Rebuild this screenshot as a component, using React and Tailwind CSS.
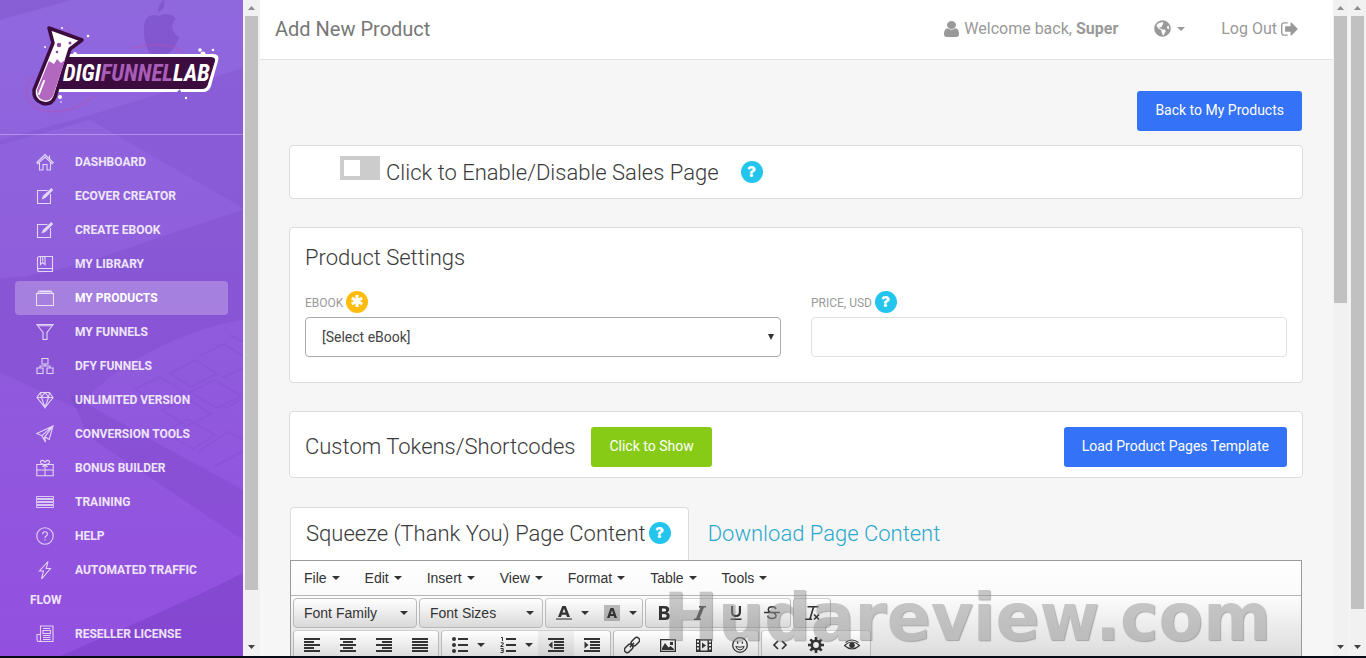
import { useState } from 'react';
import { FaGlobeAmericas, FaQuestion } from 'react-icons/fa';

const navItems = [
    { label: 'Dashboard', icon: 'home' },
    { label: 'eCover Creator', icon: 'note' },
    { label: 'Create eBook', icon: 'note' },
    { label: 'My Library', icon: 'library' },
    { label: 'My Products', icon: 'box' },
    { label: 'My Funnels', icon: 'funnel' },
    { label: 'DFY Funnels', icon: 'network' },
    { label: 'Unlimited Version', icon: 'diamond' },
    { label: 'Conversion Tools', icon: 'plane' },
    { label: 'Bonus Builder', icon: 'gift' },
    { label: 'Training', icon: 'menu' },
    { label: 'Help', icon: 'help' },
    { label: 'Automated Traffic Flow', icon: 'bolt' },
    { label: 'Reseller License', icon: 'news' },
];

// thin 18x18 outline icons
const navIcons = {
    home: <path d="M.8 9.500 9 1.600l8.200 7.900-1 1.200L9 4l-7.200 6.700zM3.500 9.500v7.500h3.500v-5.500h4v5.500h3.500V9.500M13.500 2.500v3" />,
    note: <path d="M11.500 3.500H1.500v13h13V7M6.500 11.500l1-2.500 7.800-7.200 1.200 1.200-7.500 7.500zM7.500 10.500l8.500-8.500" />,
    library: <path d="M1.500 3.500q0-2 2-2h13v15h-13q-2 0-2-2zM1.500 13.500h15M4.500 1.500v8l2.200-2 2.300 2v-8M6.700 1.500v5" />,
    box: <path d="M.5 4.500h17v12H.5zM1.500 4.500l1.500-2.500h12l1.500 2.500M3.500 3h11" />,
    funnel: <path d="M.8 1.500h16.400L11 9.500v7H7v-7zM1.500 2.800h15" />,
    network: <path d="M6 1.500h6v5.500H6zM1 11h6v5.500H1zM11 11h6v5.500h-6zM9 7v2M4 11V9h10v2" />,
    diamond: <path d="M4.500 1.500h9L17 6.500 9 16.500 1 6.500zM1 6.500h16M5.500 6.500 9 16.500l3.500-10M5.500 6.500 7 4l2-2.500L11 4l1.500 2.500M4.500 1.500l1 5M13.500 1.500l-1 5" />,
    plane: <path d="M17 1 .8 8.500l5 2.200L17 1l-3.800 13.500-4.400-2.700L17 1M5.800 10.700 9.500 17l-.7-5.200M8.800 11.800l-1.200 2" />,
    gift: <path d="M.8 5.500h16.400v11.200H.8zM.8 11h16.400M9 5.500v11.200M9 5.500C7 5.500 4.500 5 4.500 3S7.500.5 9 3.200C10.500.5 13.500 1 13.500 3S11 5.500 9 5.500zM9 5.500 6.500 8M9 5.500 11.500 8" />,
    menu: <path d="M.5 3.500h17v2H.5zM.5 6.500h17v2H.5zM.5 9.500h17v2H.5zM.5 12.500h17v2H.5z" strokeWidth=".9" />,
    help: (
        <>
            <circle cx="9" cy="9" r="8.200" />
            <path d="M6.600 7.200q0-2.500 2.400-2.500t2.400 2.200q0 1.300-1.200 2T9 11M9 12.300v1.200" />
        </>
    ),
    bolt: <path d="M12 .5 3.500 10h4L5.500 18l9-10.500h-4.300z" />,
    news: <path d="M4.500 1h12.500v15.500H2.500Q1 16.500 1 14.500v-5h3.500zM4.500 9.500v5q0 2-1 2M7 3.500h7.500M7 5.500h7.500v3H7zM7 10.500h7.500M7 12.500h7.500M7 14.500h7.500" />,
};

function NavIcon({ name }) {
    return (
        <svg
            viewBox="0 0 18 18"
            className="mb-0.5 ml-1.5 mr-[21px] inline-block h-[18px] w-[18px] fill-none stroke-white/75 align-middle"
            strokeWidth="1.100"
            aria-hidden="true"
        >
            {navIcons[name]}
        </svg>
    );
}

function SidebarBackdrop() {
    return (
        <svg className="absolute inset-0 h-full w-full" viewBox="0 0 243 656" preserveAspectRatio="none" aria-hidden="true">
            <defs>
                <linearGradient id="side" x1="0" y1="0" x2="0" y2="1">
                    <stop offset="0" stopColor="#9068de" />
                    <stop offset=".4" stopColor="#8f5edc" />
                    <stop offset="1" stopColor="#9350e0" />
                </linearGradient>
            </defs>
            <path fill="url(#side)" d="M0 0h243v656H0z" />
            <g fill="#5b2aa5">
                <path opacity=".14" d="M0 0h72L0 20z" />
                <path opacity=".1" d="M0 140 90 115l153-47v140L90 120 0 145z" />
                <path opacity=".12" d="M0 278c60 0 150-40 243-68v110c-70 10-150 60-163 90L0 372z" />
                <path opacity=".14" d="M70 395 243 490v50L88 436z" />
                <path opacity=".24" d="M60 656C120 630 190 600 243 573v83z" />
                <path opacity=".26" d="M144 28c0-12 8-15 15-12 5-3 13-3 17 3-6 4-5 14 3 18-3 9-8 17-13 17H150c-5-8-6-16-6-26zM158 12c0-6 3-11 6-12 1 6-1 11-6 12z" />
            </g>
            <g stroke="#6d37b5" strokeWidth="2" fill="none" opacity=".12">
                <path d="m170 373 25-13 22 14-26 13zM200 356l24-12 19 12M222 378l21-10M135 389l25-12 24 15-26 12zM190 392l24-12 27 16-24 12zM162 410l24-12 25 16-24 12zM198 452l30-20 15 8M215 466l28-15M165 432l22-13 28 16-22 14zM225 408l18-9M230 335l13 7" />
            </g>
        </svg>
    );
}

function Logo() {
    return (
        <svg viewBox="0 0 200 100" className="h-[100px] w-[200px]" role="img" aria-label="DigiFunnelLab">
            <path d="M110 32C140 24 178 30 156 56M12 60C-4 76 6 100 40 95c12-2 24-8 32-15M47 28c3-7 2-12-2-17" fill="none" stroke="#b053b4" strokeWidth="1.500" opacity=".55" />
            <path d="M34 38h157q7 0 5 7l-7 25q-2 6-8 6h-22l-1-3-3 3H30z" fill="#fff" />
            <path d="M38 41h150q6 0 5 4l-7 23q-1 5-6 5H32z" fill="#3d0c3f" />
            <text x="41" y="65" fontFamily="'Liberation Sans Narrow', 'Roboto Condensed', 'Liberation Sans', sans-serif" fontSize="23" fontWeight="700" fontStyle="italic" fill="#fff">
                DIGI<tspan fill="#a85db8">FUNNEL</tspan>LAB
            </text>
            <path d="M27 12 60 24l-12 9-15 48q-4 9-13 6t-8-13L31 27z" fill="#fff" stroke="#3d0c3f" strokeWidth="3.500" strokeLinejoin="round" />
            <path d="m27 45 5 3 3-5 4 4 4-3-12 36q-4 6-10 4t-6-10z" fill="#b368bf" />
            <path d="m22 65-5 13" stroke="#fff" strokeWidth="2" strokeLinecap="round" />
            <g fill="#8e45a5">
                <circle cx="37" cy="29" r="2.200" />
                <circle cx="48" cy="27" r="1.500" />
                <circle cx="35" cy="36" r="1.300" />
            </g>
            <g fill="#fff">
                <circle cx="66" cy="20" r="1.300" />
                <circle cx="40" cy="12" r="1" />
                <circle cx="23" cy="31" r="1" />
                <circle cx="53" cy="38" r="2" />
                <circle cx="38" cy="81" r="2" />
                <circle cx="39" cy="86" r=".8" />
                <circle cx="164" cy="82" r="1.200" />
                <circle cx="178" cy="34" r="1.800" />
                <circle cx="181" cy="38" r="2.500" />
                <circle cx="191" cy="34" r="1.300" />
            </g>
        </svg>
    );
}

function Scrollbar({ thumb }) {
    return (
        <div className="flex w-4 shrink-0 flex-col items-center bg-[#f1f1f1]" aria-hidden="true">
            <svg viewBox="0 0 16 16" className="h-4 w-4 shrink-0 fill-[#8b8b8b]"><path d="m4 10 3.500-4L11 10z" /></svg>
            <div className="w-full min-h-0 flex-1 pl-px pr-0.5">
                <div className={`bg-[#c1c1c1] ${thumb}`} />
            </div>
            <svg viewBox="0 0 16 16" className="h-4 w-4 shrink-0 fill-[#404040]"><path d="m4 5 3.500 4L11 5z" /></svg>
        </div>
    );
}

function Badge({ type = 'help' }) {
    if (type === 'required') {
        return (
            <span className="inline-flex h-[22px] w-[22px] shrink-0 items-center justify-center rounded-full bg-[#ffbc0c] pb-0.5 text-white">
                <svg viewBox="0 0 12 12" className="h-3 w-3" stroke="currentColor" strokeWidth="3" aria-hidden="true">
                    <path d="M6 0v12M.8 3l10.400 6M.8 9l10.400-6" />
                </svg>
            </span>
        );
    }
    return (
        <span className="inline-flex h-[22px] w-[22px] shrink-0 items-center justify-center rounded-full bg-[#23c5ec] pb-0.5 text-white">
            <FaQuestion className="h-[11px] w-[11px] stroke-current" strokeWidth="24" />
        </span>
    );
}

function Caret() {
    return (
        <svg viewBox="0 0 8 4" className="h-1 w-2 shrink-0 fill-current" aria-hidden="true"><path d="M0 0h8L4 4z" /></svg>
    );
}

const toolIcons = {
    left: <path d="M0 2h16v2H0zM0 5h10v2H0zM0 8h16v2H0zM0 11h10v2H0zM0 14h16v2H0z" />,
    center: <path d="M0 2h16v2H0zM3 5h10v2H3zM0 8h16v2H0zM3 11h10v2H3zM0 14h16v2H0z" />,
    right: <path d="M0 2h16v2H0zM6 5h10v2H6zM0 8h16v2H0zM6 11h10v2H6zM0 14h16v2H0z" />,
    justify: <path d="M0 2h16v2H0zM0 5h16v2H0zM0 8h16v2H0zM0 11h16v2H0zM0 14h16v2H0z" />,
    bullets: <path d="M6 2h10v2H6zM6 8h10v2H6zM6 14h10v2H6zM0 3a2 2 0 1 1 4 0 2 2 0 0 1-4 0zM0 9a2 2 0 1 1 4 0 2 2 0 0 1-4 0zM0 15a2 2 0 1 1 4 0 2 2 0 0 1-4 0z" />,
    numbers: (
        <>
            <path d="M6 2h10v2H6zM6 8h10v2H6zM6 14h10v2H6z" />
            <path d="M1 1.500h1.500V5M.8 6.800h2.400v1.500L.8 10v.5h2.700M.5 12.500h2.700v4H.5M1 14.400h2" fill="none" stroke="currentColor" />
        </>
    ),
    outdent: <path d="M0 2h16v2H0zM6 5h10v2H6zM6 8h10v2H6zM6 11h10v2H6zM0 14h16v2H0zM4.500 5.500v7L.5 9z" />,
    indent: <path d="M0 2h16v2H0zM6 5h10v2H6zM6 8h10v2H6zM6 11h10v2H6zM0 14h16v2H0zM.5 5.500v7l4-3.500z" />,
    link: (
        <g fill="none" stroke="currentColor" strokeWidth="1.500" transform="rotate(-45 8 9)">
            <rect x="-1.500" y="6.200" width="9.500" height="5.600" rx="2.800" />
            <rect x="8" y="6.200" width="9.500" height="5.600" rx="2.800" />
            <path d="M5 9h6" />
        </g>
    ),
    image: <path fillRule="evenodd" d="M0 3h16v13H0zm1.300 1.300v10.400h13.400V4.300zM2 14V12l3-5 3.500 4.500L10.500 10l3.500 3v1zM10 6h3v3h-3z" />,
    media: <path fillRule="evenodd" d="M0 3h16v13H0zm1 1.500v2h2v-2zm0 3.500v2h2V8zm0 3.500v2h2v-2zM13 4.500v2h2v-2zM13 8v2h2V8zm0 3.500v2h2v-2zM4.500 4.500v10h7v-10zM6 6.500l4 3-4 3z" />,
    smile: (
        <g fill="none" stroke="currentColor" strokeWidth="1.300">
            <circle cx="8" cy="9" r="7.300" />
            <path d="M3.800 10.500Q5 14 8 14t4.200-3.500q-4.200 1.500-8.400 0z" strokeWidth="1" />
            <path d="M5.600 5.500v2.300M10.400 5.500v2.300" />
        </g>
    ),
    code: <path d="M6 5 2 9l4 4M10 5l4 4-4 4" fill="none" stroke="currentColor" strokeWidth="1.700" />,
    gear: (
        <g fill="none" stroke="currentColor">
            <circle cx="8" cy="9" r="4.200" strokeWidth="2.600" />
            <path d="M8 1v3M8 14v3M0 9h3M13 9h3M2.300 3.300l2.200 2.200M11.500 12.500l2.200 2.200M13.700 3.300l-2.200 2.200M4.500 12.500l-2.200 2.200" strokeWidth="2.600" />
        </g>
    ),
    eye: (
        <g fill="none" stroke="currentColor" strokeWidth="1.100">
            <path d="M.5 9.500Q8 2.500 15.500 9.500 8 16.500.5 9.500zM1.500 6.500Q8 1.500 14.500 6.500" />
            <circle cx="8" cy="9.300" r="2.200" fill="currentColor" />
        </g>
    ),
    bold: <path fillRule="evenodd" d="M3 2h6q4.200 0 4.200 3.600 0 2.200-1.900 3 2.500.8 2.500 3.500 0 3.900-4.600 3.900H3zm3 2.400v3.200h2.200q2 0 2-1.600t-2-1.600zm0 5.500v3.700h2.500q2.200 0 2.200-1.900 0-1.800-2.200-1.800z" />,
    italic: <path d="M7 2h7v1.500h-2L7.500 14.500H9V16H2v-1.500h2L8.500 3.500H7z" />,
    underline: <path d="M3 2h2.200v6q0 3 2.800 3t2.800-3V2H13v6q0 5-5 5T3 8zM2.500 14.500h11V16h-11z" />,
    strike: <path d="M0 8.500h16M12 5q-.5-2.300-4-2.300T4.300 5.500q0 2.500 3.700 3t4 3.300q0 2.700-4 2.700t-4.300-2.800" fill="none" stroke="currentColor" strokeWidth="1.500" />,
    clear: <path d="M3.500 2.800h11M9.500 3 6 15M1 15.200h7M10 10.500l5 5M15 10.500l-5 5" fill="none" stroke="currentColor" strokeWidth="1.600" />,
    forecolor: (
        <>
            <path fillRule="evenodd" d="M6.300 2h3.400L14 13h-3l-.8-2.200H5.800L5 13H2zM6.500 8.600h3L8 4.500z" />
            <path d="M0 14h16v2H0z" opacity=".55" />
        </>
    ),
    backcolor: (
        <>
            <path d="M0 1h16v16H0z" opacity=".3" />
            <path fillRule="evenodd" d="M6.500 4h3L13 14h-2.600l-.6-2H6.200l-.6 2H3zM6.800 10h2.400L8 6.200z" />
        </>
    ),
};

function ToolButton({ icon, label, split, disabled }) {
    return (
        <button
            type="button"
            aria-label={label}
            disabled={disabled}
            className={`flex h-7 items-center pl-2.5 ${split ? 'w-12 gap-[9px]' : 'w-9'} ${disabled ? 'bg-black/5' : ''}`}
        >
            <svg viewBox="0 0 16 18" className="h-[18px] w-4 shrink-0 fill-current" aria-hidden="true">{toolIcons[icon]}</svg>
            {split && <Caret />}
        </button>
    );
}

function ToolGroup({ items }) {
    return (
        <div className="flex rounded-sm border border-[#b9b9b9] border-t-[#cfcfcf] bg-linear-to-b from-white to-[#d9d9d9]">
            {items.map((item) => <ToolButton key={item.icon} {...item} />)}
        </div>
    );
}

function ListBox({ label }) {
    return (
        <button
            type="button"
            className="flex h-[30px] w-[124px] items-center justify-between rounded-sm border border-[#b9b9b9] bg-linear-to-b from-white to-[#d9d9d9] pl-2.5 pr-2"
        >
            {label}
            <Caret />
        </button>
    );
}

function Editor() {
    const menus = ['File', 'Edit', 'Insert', 'View', 'Format', 'Table', 'Tools'];
    return (
        <div className="mx-px h-[300px] border border-[#9a9a9a] bg-white font-['Liberation_Sans',Arial,sans-serif] text-sm text-[#333]">
            <div className="flex h-[35px] items-center gap-px border-b border-[#b5b5b5] bg-linear-to-b from-white to-[#fafafa] pl-px">
                {menus.map((menu) => (
                    <button key={menu} type="button" className="flex items-center gap-[5px] px-3">
                        {menu}
                        <Caret />
                    </button>
                ))}
            </div>
            <div className="flex flex-col gap-0.5 bg-linear-to-b from-[#fcfcfc] to-[#d9d9d9] px-0.5 py-0.5">
                <div className="flex gap-0.5">
                    <ListBox label="Font Family" />
                    <ListBox label="Font Sizes" />
                    <ToolGroup items={[{ icon: 'forecolor', label: 'Text color', split: true }, { icon: 'backcolor', label: 'Background color', split: true }]} />
                    <ToolGroup items={[{ icon: 'bold', label: 'Bold' }, { icon: 'italic', label: 'Italic' }, { icon: 'underline', label: 'Underline' }, { icon: 'strike', label: 'Strikethrough' }]} />
                    <ToolGroup items={[{ icon: 'clear', label: 'Clear formatting' }]} />
                </div>
                <div className="flex gap-0.5">
                    <ToolGroup items={[{ icon: 'left', label: 'Align left' }, { icon: 'center', label: 'Align center' }, { icon: 'right', label: 'Align right' }, { icon: 'justify', label: 'Justify' }]} />
                    <ToolGroup items={[{ icon: 'bullets', label: 'Bullet list', split: true }, { icon: 'numbers', label: 'Numbered list', split: true }, { icon: 'outdent', label: 'Decrease indent', disabled: true }, { icon: 'indent', label: 'Increase indent' }]} />
                    <ToolGroup items={[{ icon: 'link', label: 'Insert link' }, { icon: 'image', label: 'Insert image' }, { icon: 'media', label: 'Insert video' }, { icon: 'smile', label: 'Emoticons' }]} />
                    <ToolGroup items={[{ icon: 'code', label: 'Source code' }, { icon: 'gear', label: 'Settings' }, { icon: 'eye', label: 'Preview' }]} />
                </div>
            </div>
        </div>
    );
}

const card = 'rounded border border-[#dcdcdf] bg-white';
const button = 'h-10 rounded-[3px] px-[18px] pb-0.5 text-sm text-white';
const heading = 'text-[22px] font-light leading-[30px] text-[#3a3a3a]';

function App() {
    const [salesPage, setSalesPage] = useState(false);

    return (
        <div className="relative flex h-screen flex-col overflow-hidden bg-[#f6f6f6] font-[Roboto,sans-serif]">
            <div className="flex min-h-0 flex-1">
                {/* Sidebar */}
                <aside className="relative w-[243px] shrink-0 overflow-hidden">
                    <SidebarBackdrop />
                    <div className="relative">
                        <div className="flex h-[135px] justify-center border-b border-white/30 pt-4">
                            <Logo />
                        </div>
                        <nav className="px-[15px] pt-3">
                            {navItems.map((item, i) => (
                                <a
                                    key={item.label}
                                    href="#"
                                    className={`block rounded px-[15px] py-0.5 text-xs font-bold uppercase leading-[30px] -mt-0.5 mb-0.5 ${i === 4 ? 'bg-white/25 text-white' : 'text-white/85'}`}
                                >
                                    <NavIcon name={item.icon} />
                                    {item.label}
                                </a>
                            ))}
                        </nav>
                    </div>
                </aside>
                <div className="w-px shrink-0 bg-[#f7eefa]" />
                <Scrollbar thumb="h-[92%]" />

                {/* Main Content */}
                <main className="min-w-0 flex-1 overflow-hidden">
                    <header className="flex h-[60px] items-center justify-between border-b border-[#e2e2e2] bg-white pb-0.5 pl-[15px] pr-[35px]">
                        <h1 className="text-xl text-[#777]">Add New Product</h1>
                        <div className="flex items-center text-base text-[#999]">
                            <a href="#" className="flex items-center gap-[5px]">
                                <svg viewBox="0 128 1280 1536" preserveAspectRatio="none" className="h-4 w-[15px] fill-current" aria-hidden="true">
                                    <path d="M1280 1399q0 109-62.500 187t-150.500 78H213q-88 0-150.500-78T0 1399q0-85 8.500-160.500t31.500-152 58.500-131 94-89T327 832q131 128 313 128t313-128q76 0 134.500 34.500t94 89 58.500 131 31.500 152 8.500 160.500zM1024 512q0 159-112.500 271.500T640 896 368.500 783.500 256 512t112.500-271.500T640 128t271.500 112.500T1024 512z" />
                                </svg>
                                <span>Welcome back, <b>Super</b></span>
                            </a>
                            <button type="button" aria-label="Language" className="mx-9 flex items-center gap-1.5">
                                <FaGlobeAmericas className="h-[17px] w-[17px]" />
                                <Caret />
                            </button>
                            <a href="#" className="flex items-center gap-1">
                                Log Out
                                <svg viewBox="0 256 1600 1280" className="h-[14px] w-[17px] fill-current" aria-hidden="true">
                                    <path d="M640 1440q0 4 1 20t.5 26.500-3 23.500-10 19.500-20.500 6.500H288q-119 0-203.500-84.500T0 1248V544q0-119 84.500-203.500T288 256h320q13 0 22.500 9.500T640 288q0 4 1 20t.5 26.500-3 23.500-10 19.500T608 384H288q-66 0-113 47t-47 113v704q0 66 47 113t113 47h312l11.500 1 11.500 3 8 5.500 7 9 2 13.500zm928-544q0 26-19 45l-544 544q-19 19-45 19t-45-19-19-45v-288H448q-26 0-45-19t-19-45V704q0-26 19-45t45-19h448V352q0-26 19-45t45-19 45 19l544 544q19 19 19 45z" />
                                </svg>
                            </a>
                        </div>
                    </header>

                    <div className="pl-[29px] pr-[30px] pt-[31px]">
                        <div className="mb-3.5 flex justify-end pr-px">
                            <button type="button" className={`${button} bg-[#3472f7]`}>Back to My Products</button>
                        </div>

                        <section className={`${card} mb-7 flex h-[54px] items-center pl-[50px]`}>
                            <input
                                id="sales-page"
                                type="checkbox"
                                checked={salesPage}
                                onChange={(e) => setSalesPage(e.target.checked)}
                                className="mb-2 mr-1.5 flex h-6 w-10 appearance-none items-center bg-[#ccc] px-1 before:h-4 before:w-4 before:bg-white checked:justify-end checked:bg-[#3472f7]"
                            />
                            <label htmlFor="sales-page" className={`${heading} mr-[22px] pt-0.5`}>Click to Enable/Disable Sales Page</label>
                            <Badge />
                        </section>

                        <section className={`${card} mb-7 px-[15px] pb-[25px] pt-[15px]`}>
                            <h2 className={heading}>Product Settings</h2>
                            <div className="mt-[18px] grid grid-cols-2 gap-[30px]">
                                <div>
                                    <div className="mb-1 flex h-[22px] items-center gap-[3px]">
                                        <label htmlFor="ebook" className="pt-0.5 text-xs uppercase text-[#9a9a9a]">eBook</label>
                                        <Badge type="required" />
                                    </div>
                                    <div className="relative">
                                        <select id="ebook" className="block h-10 w-full appearance-none rounded border border-[#aaa] bg-white px-4 text-sm text-[#444]">
                                            <option>[Select eBook]</option>
                                        </select>
                                        <svg viewBox="0 0 6 6" className="pointer-events-none absolute right-[7px] top-[17px] h-1.5 w-1.5 fill-[#333]" aria-hidden="true"><path d="M0 0h6L3 6z" /></svg>
                                    </div>
                                </div>
                                <div>
                                    <div className="mb-1 flex h-[22px] items-center gap-[3px]">
                                        <label htmlFor="price" className="pt-0.5 text-xs uppercase text-[#9a9a9a]">Price, USD</label>
                                        <Badge />
                                    </div>
                                    <input id="price" type="text" className="block h-10 w-full rounded border border-[#e0e0e0] bg-white px-4 text-sm text-[#444]" />
                                </div>
                            </div>
                        </section>

                        <section className={`${card} mb-[29px] flex items-center px-[15px] pb-2.5 pt-[15px]`}>
                            <h2 className={`${heading} mr-4`}>Custom Tokens/Shortcodes</h2>
                            <button type="button" className={`${button} bg-[#87cb16]`}>Click to Show</button>
                            <button type="button" className={`${button} ml-auto bg-[#3472f7]`}>Load Product Pages Template</button>
                        </section>

                        <div className="ml-px flex h-[53px] items-center">
                            <a href="#" className="flex h-full items-center gap-[3px] rounded-t border border-b-0 border-[#dcdcdf] bg-white pb-0.5 pl-[15px] pr-[17px]">
                                <span className={`${heading} pt-0.5`}>Squeeze (Thank You) Page Content</span>
                                <Badge />
                            </a>
                            <a href="#" className="ml-[19px] text-[22px] font-light leading-[30px] text-[#2ba9cd]">Download Page Content</a>
                        </div>
                        <Editor />
                    </div>
                </main>
                <Scrollbar thumb="h-[46%]" />
                <div className="w-px shrink-0 bg-[#f6f6f6]" />
                <Scrollbar thumb="h-[95%]" />
            </div>
            <div className="h-0.5 shrink-0 bg-[#060b16]" />
            <div className="pointer-events-none absolute bottom-2 right-[95px] font-['DejaVu_Sans',sans-serif] text-[65px] font-bold leading-none text-[#949494] opacity-50 [text-shadow:1px_1px_1px_#666]">
                Hudareview.com
            </div>
        </div>
    );
}

export default App;
